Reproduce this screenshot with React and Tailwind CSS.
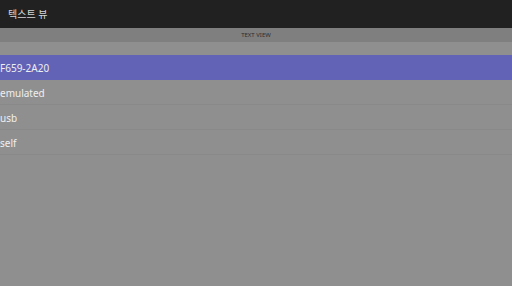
import React from "react";

const rows = ["F659-2A20", "emulated", "usb", "self"];

const App = () => {
    return (
        <div className="w-[512px] h-[286px] overflow-hidden bg-[#8f8f8f] flex flex-col" style={{ fontFamily: '"Noto Sans", "Noto Sans CJK KR", sans-serif' }}>
            {/* ── App bar ── */}
            <div className="h-[28px] bg-[#212121] flex items-center px-[8px] shrink-0">
                <span className="text-[10px] text-[#d6d6d6] leading-none">텍스트 뷰</span>
            </div>

            {/* ── Section label ── */}
            <div className="h-[14px] bg-[#7f7f7f] flex items-center justify-center shrink-0">
                <span className="text-[6px] text-[#2e2e2e] leading-none">TEXT VIEW</span>
            </div>

            <div className="h-[13px] shrink-0" />

            {/* ── List ── */}
            <div className="flex flex-col">
                {rows.map((r, i) => (
                    <div
                        key={r}
                        className={
                            i === 0
                                ? "h-[25px] bg-[#6262b6] flex items-center pt-[1px]"
                                : "h-[25px] border-b border-[#898989] flex items-center pt-[2px]"
                        }
                    >
                        <span className="text-[10px] text-[#efefef] leading-none">{r}</span>
                    </div>
                ))}
            </div>
        </div>
    );
};

export default App;
